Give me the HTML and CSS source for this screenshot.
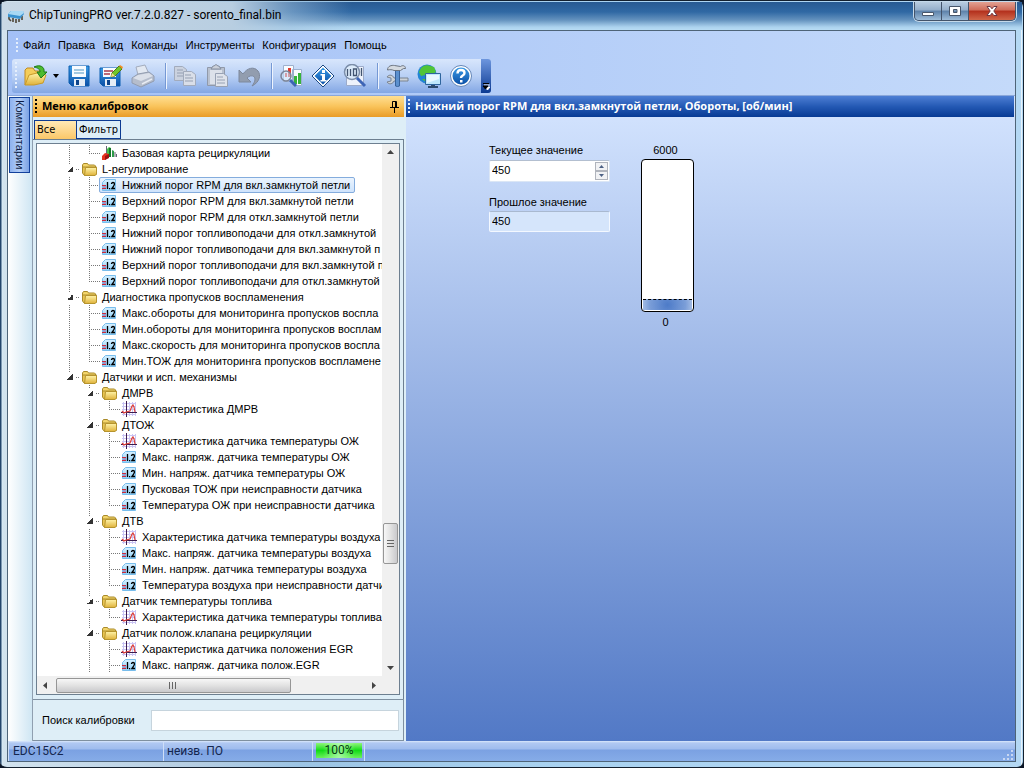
FILE: index.html
```html
<!DOCTYPE html>
<html lang="ru">
<head>
<meta charset="utf-8">
<title>ChipTuningPRO</title>
<link rel="stylesheet" href="styles.css">
</head>
<body>
<svg class="defs" aria-hidden="true">
  <defs>
    <linearGradient id="gFold" x1="0" y1="0" x2="0" y2="1"><stop offset="0" stop-color="#fff3a8"/><stop offset="1" stop-color="#dfb23a"/></linearGradient>
    <linearGradient id="gBlue" x1="0" y1="0" x2="0" y2="1"><stop offset="0" stop-color="#3a9be6"/><stop offset="1" stop-color="#0a4fa6"/></linearGradient>
    <linearGradient id="gNum" x1="0" y1="0" x2="0" y2="1"><stop offset="0" stop-color="#d6f0ff"/><stop offset="1" stop-color="#8fd0f8"/></linearGradient>
  </defs>
  <symbol id="folder" viewBox="0 0 17 16">
    <path d="M1.500 11.500V4l1-1.500h4L7.500 4h6l1 1v7" fill="#f3d56a" stroke="#a98a2a"/>
    <path d="M4.500 6h11v7l-1.500 1.500H3.500L1.500 12V6z" fill="#e8c552" stroke="#a98a2a"/>
    <path d="M4.500 6.500h11v6.500l-1.500 1.500H3.500z" fill="url(#gFold)" stroke="#b6942e"/>
  </symbol>
  <symbol id="num" viewBox="0 0 17 16">
    <path d="M4.500 2.500h10v11h-13v-8z" fill="url(#gNum)" stroke="#78bdec"/>
    <path d="M1 8.500h4M1 11.500h4" stroke="#cc2a3a"/><path d="M2 10h3" stroke="#8a5aa0"/>
    <path d="M6.500 5v7M10.500 7q0-1.500 1.500-1.500t1.500 1.500q0 1-2.500 4.500h3" fill="none" stroke="#000" stroke-width="1.300"/><path d="M8 11h1.200v1.200H8z"/>
  </symbol>
  <symbol id="graph" viewBox="0 0 17 16">
    <path d="M1 2.500h14M1 5.500h14M1 8.500h14M1 13.500h14M2.500 1v14M8.500 1v14M11.500 1v14M14.500 1v14" stroke="#c9c4f4"/>
    <path d="M5.500 0v16M0 11.500h16" stroke="#3c1c50"/>
    <path d="M1 10l2 2 2-1 4-1 2-5 1-1 1 2 1 5" fill="none" stroke="#e04038" stroke-width="1.200"/>
  </symbol>
  <symbol id="map" viewBox="0 0 17 16">
    <path d="M5.500 1v9M14 7v5M15.500 9v3" stroke="#667"/>
    <path d="M6 4l2-2 2 1v9H6z" fill="#47bf4a"/><path d="M8 3l2 0v9L8 12z" fill="#14752a"/>
    <path d="M11 5l2 1v6h-2z" fill="#2c9a48"/><path d="M1 11l3-3 4 1v3l-4 3H1z" fill="#e5321e"/><path d="M4 11l4-2v4l-4 2z" fill="#a01010"/>
  </symbol>
  <symbol id="grip" viewBox="0 0 4 14"><path d="M2 0v14" stroke="currentColor" stroke-width="2" stroke-dasharray="2 2"/></symbol>
</svg>

<div class="window">
  <header class="titlebar">
    <svg class="chip" viewBox="0 0 18 14"><path d="M2 6v3l2 2M6 8v4M9 9v4M12 9v3M15 6v4" fill="none" stroke="#4f4638" stroke-width="1.600"/><path d="M1 4l3-3h12l1 3-4 5-12-2z" fill="#3b92cf"/><path d="M1 4l3-3h12l1 2-4 3z" fill="#a8d8f4"/></svg>
    <h1 class="caption">ChipTuningPRO ver.7.2.0.827 - sorento_final.bin</h1>
    <div class="winbuttons">
      <button class="winbtn" aria-label="Свернуть"><svg viewBox="0 0 14 12"><path d="M1.500 7.500h11v3h-11z" fill="#fff" stroke="#48566a"/></svg></button>
      <button class="winbtn" aria-label="Развернуть"><svg viewBox="0 0 14 12"><path d="M1.500 1.500h11v9h-11z M5.500 4.500v3h3.500v-3z" fill="#fff" fill-rule="evenodd" stroke="#48566a"/></svg></button>
      <button class="winbtn winbtn-close" aria-label="Закрыть"><svg viewBox="0 0 14 12"><path d="M2 1.500h3.200L7 3.800l1.800-2.300H12L8.800 6l3.200 4.500H8.800L7 8.200l-1.800 2.300H2L5.200 6z" fill="#fff" stroke="#6b3540"/></svg></button>
    </div>
  </header>

  <div class="client">
    <nav class="menubar">
      <svg class="grip"><use href="#grip"/></svg>
      <button class="menu">Файл</button><button class="menu">Правка</button><button class="menu">Вид</button><button class="menu">Команды</button><button class="menu">Инструменты</button><button class="menu">Конфигурация</button><button class="menu">Помощь</button>
    </nav>

    <div class="toolbar-row">
      <div class="toolbar">
        <svg class="grip grip-tall" viewBox="0 0 4 28"><path d="M2 0v28" stroke="currentColor" stroke-width="2" stroke-dasharray="2 2"/></svg>
        <button class="tool" aria-label="Открыть"><svg viewBox="0 0 24 24"><path d="M1 21V6l2-2h6l2 3h8v5" fill="#f4cd5a" stroke="#c08a20"/><path d="M1 21l4-10 8-2 9 2-3 8-9 2z" fill="url(#gFold)" stroke="#c99a28"/><path d="M10 3c6-3 11 0 10 5h3l-6 6-4-6h3c0-3-2-4-6-5z" fill="#4cbb2e" stroke="#1b7a17"/></svg></button>
        <button class="drop" aria-label="Список файлов"><svg viewBox="0 0 6 4"><path d="M0 0h6L3 4z"/></svg></button>
        <button class="tool" aria-label="Сохранить"><svg viewBox="0 0 24 24"><path d="M2 2h20v20H5l-3-3z" fill="url(#gBlue)" stroke="#0b5eb0"/><path d="M5 2h14v11H5z" fill="#f7fbff"/><path d="M7 6h10M7 9h10" stroke="#86b8d8" stroke-width="1.500"/><path d="M7 15h11v7H7z" fill="#e4edf6"/><path d="M9 16h3v5H9z" fill="#0c448c"/></svg></button>
        <button class="tool" aria-label="Сохранить как"><svg viewBox="0 0 24 24"><path d="M1 4h20v18H4l-3-3z" fill="url(#gBlue)" stroke="#0b5eb0"/><path d="M4 4h13v9H4z" fill="#f7fbff"/><path d="M5 7h9M5 10h6" stroke="#a93a4c" stroke-width="1.500"/><path d="M6 15h11v7H6z" fill="#e4edf6"/><path d="M8 16h3v5H8z" fill="#0c448c"/><path d="M12 13l1-4 7-7 3 3-7 7z" fill="#6fc62a" stroke="#4d7716"/><path d="M20 2l1-1 3 2-1 2z" fill="#f19022"/><path d="M12 13l1-4 3 3z" fill="#f6dc90"/></svg></button>
        <button class="tool" aria-label="Печать"><svg viewBox="0 0 24 24"><path d="M7 11L5 3l9-2 4 9z" fill="#e2e8f1" stroke="#a3acbd"/><path d="M1 14l6-4 11-2 5 4v5l-13 6-9-4z" fill="#b5bdcc" stroke="#929caf"/><path d="M2 14l5-3 11-2 4 3-12 5z" fill="#dbe0e9"/><path d="M11 20l10-5" stroke="#e7ebf2" stroke-width="1.500"/></svg></button>
        <span class="sep"></span>
        <button class="tool" aria-label="Копировать"><svg viewBox="0 0 24 24"><path d="M1.500 2.500h8l4 3v11h-12z" fill="#cbd2df" stroke="#a2abbc"/><path d="M4 6h6M4 9h8M4 12h8" stroke="#96a0b3"/><path d="M10.500 7.500h8l4 3v11h-12z" fill="#d9dee8" stroke="#a2abbc"/><path d="M12 11h6M12 14h8M12 17h8" stroke="#96a0b3"/></svg></button>
        <button class="tool" aria-label="Вставить"><svg viewBox="0 0 24 24"><path d="M2.500 3.500h17v18h-17z" fill="#b9c1cf" stroke="#9099aa"/><path d="M5 6h12v14H5z" fill="#dce1ea"/><path d="M6 5l2-3h1q2-3 4 0h1l2 3z" fill="#cbd0d9" stroke="#848e9f"/><path d="M10.500 9.500h8l4 3v10h-12z" fill="#dfe3eb" stroke="#98a2b4"/><path d="M12 13h6M12 16h8M12 19h8" stroke="#98a2b4"/></svg></button>
        <button class="tool" aria-label="Отменить"><svg viewBox="0 0 24 24"><path d="M2 6v12h12l-4-4c5-5 12-1 5 8 8-4 9-11 6-15-4-5-11-3-15 3z" fill="#929daf" stroke="#7d889c"/></svg></button>
        <span class="sep"></span>
        <button class="tool" aria-label="Сравнить"><svg viewBox="0 0 24 24"><path d="M4.500 1.500h10v16h-10zM13.500 5.500h9v16h-9z" fill="#f8fbff" stroke="#9cb0ce"/><path d="M6 9h2v4H6zM9 4h3v9H9z" fill="#e23a2e"/><path d="M15 12h3v8h-3zM19 9h3v11h-3z" fill="#36b43b"/><circle cx="7" cy="12" r="5" fill="#c8e1f8" fill-opacity=".6" stroke="#7b8498" stroke-width="1.500"/><path d="M11 16l6 6" stroke="#3d65b6" stroke-width="3"/></svg></button>
        <button class="tool" aria-label="Информация"><svg viewBox="0 0 24 24"><path d="M12 1l11 11-11 11L1 12z" fill="#fff" stroke="#194783"/><path d="M12 3.500l8.500 8.500-8.500 8.500L3.500 12z" fill="url(#gBlue)"/><path d="M11 6h3v3h-3zM9.500 10H14v6h1.500v1.500h-6V16H11v-4.500H9.500z" fill="#fff"/></svg></button>
        <button class="tool" aria-label="Просмотр кода"><svg viewBox="0 0 24 24"><path d="M3.500 2.500h17v19h-17z" fill="#edf2fb" stroke="#9cabca"/><circle cx="9" cy="8" r="7.500" fill="#dcebfb" stroke="#7b8da9" stroke-width="1.500"/><path d="M4.500 5v7M7.500 5v7M18.500 4v8M10.500 5v6.500h3V5z" fill="none" stroke="#425470" stroke-width="1.300"/><path d="M14 14l8 8" stroke="#3d65b6" stroke-width="3"/></svg></button>
        <span class="sep"></span>
        <button class="tool" aria-label="Настройки"><svg viewBox="0 0 24 24"><path d="M2 13l4 1v3l-4 1c2 3 6 2 7-1h14v-3H9c-1-3-5-4-7-1z" fill="#cbd1d8" stroke="#7b8490"/><path d="M10.500 6h4v16q-2 1-4 0z" fill="#5c90ce" stroke="#38639c"/><path d="M2.500 6c0-4 4-5 7-4.500l6 1c2-1.500 5-1 5 2h-2l-3 2H9c-2-1-4-1-6.500-.5z" fill="#d5dae0" stroke="#6d7581"/></svg></button>
        <button class="tool" aria-label="Обновление"><svg viewBox="0 0 24 24"><circle cx="10" cy="10" r="9.500" fill="#2285d4"/><path d="M4 4c5-5 9-2 13-1l2 5-5 3-2 4-4-4-4 1-2-4zM5 15l4 0v3z" fill="#50c537"/><path d="M8.500 9.500h15v11h-15z" fill="#bfe7fb" stroke="#2e659d"/><path d="M10 11h12v4l-12 4z" fill="#e8f8ff"/><path d="M14 21h4v1h3v2H11v-2h3z" fill="#2c4a6d"/></svg></button>
        <button class="tool" aria-label="Помощь"><svg viewBox="0 0 24 24"><circle cx="12" cy="12" r="10.500" fill="#fff" stroke="#6386b8"/><circle cx="12" cy="12" r="8.500" fill="url(#gBlue)"/><path d="M8.500 9.500q0-3.500 3.500-3.500t3.500 3q0 1.500-1.800 2.500t-1.700 2.500" fill="none" stroke="#fff" stroke-width="2.400"/><path d="M11 16h2.500v2.500H11z" fill="#fff"/></svg></button>
        <button class="overflow" aria-label="Ещё"><svg viewBox="0 0 8 8"><path d="M2 2h6M3 4h5L5.500 7z" fill="#fff" stroke="#fff"/><path d="M1 .5h6M1 3h5L3.500 6z" stroke="#000"/></svg></button>
      </div>
    </div>

    <main class="workspace">
      <aside class="rail"><button class="railtab">Комментарии</button></aside>

      <section class="panel">
        <h2 class="panelhead"><svg class="grip"><use href="#grip"/></svg><span class="headtext">Меню калибровок</span>
          <button class="pin" aria-label="Закрепить"><svg viewBox="0 0 9 13"><path d="M2.500 7V1.500h4V7M5.500 1v6M0 7.500h9M4.500 8v5" fill="none" stroke="#000"/></svg></button></h2>
        <div class="tabs"><button class="tab tab-on">Все</button><button class="tab">Фильтр</button></div>
        <div class="treeframe">
          <div class="treebox">
            <div class="treeview">
              <ul class="tree">
                <li><ul>
                  <li class="leaf"><span class="row"><span class="item"><svg class="ico"><use href="#map"/></svg><span class="label">Базовая карта рециркуляции</span></span></span></li>
                </ul></li>
                <li><span class="row"><i class="twisty"></i><span class="item"><svg class="ico"><use href="#folder"/></svg><span class="label">L-регулирование</span></span></span>
                  <ul>
                    <li class="leaf"><span class="row"><span class="item selected"><svg class="ico"><use href="#num"/></svg><span class="label">Нижний порог RPM для вкл.замкнутой петли</span></span></span></li>
                    <li class="leaf"><span class="row"><span class="item"><svg class="ico"><use href="#num"/></svg><span class="label">Верхний порог RPM для вкл.замкнутой петли</span></span></span></li>
                    <li class="leaf"><span class="row"><span class="item"><svg class="ico"><use href="#num"/></svg><span class="label">Верхний порог RPM для откл.замкнутой петли</span></span></span></li>
                    <li class="leaf"><span class="row"><span class="item"><svg class="ico"><use href="#num"/></svg><span class="label">Нижний порог топливоподачи для откл.замкнутой</span></span></span></li>
                    <li class="leaf"><span class="row"><span class="item"><svg class="ico"><use href="#num"/></svg><span class="label">Нижний порог топливоподачи для вкл.замкнутой п</span></span></span></li>
                    <li class="leaf"><span class="row"><span class="item"><svg class="ico"><use href="#num"/></svg><span class="label">Верхний порог топливоподачи для вкл.замкнутой п</span></span></span></li>
                    <li class="leaf"><span class="row"><span class="item"><svg class="ico"><use href="#num"/></svg><span class="label">Верхний порог топливоподачи для откл.замкнутой</span></span></span></li>
                  </ul></li>
                <li><span class="row"><i class="twisty"></i><span class="item"><svg class="ico"><use href="#folder"/></svg><span class="label">Диагностика пропусков воспламенения</span></span></span>
                  <ul>
                    <li class="leaf"><span class="row"><span class="item"><svg class="ico"><use href="#num"/></svg><span class="label">Макс.обороты для мониторинга пропусков воспла</span></span></span></li>
                    <li class="leaf"><span class="row"><span class="item"><svg class="ico"><use href="#num"/></svg><span class="label">Мин.обороты для мониторинга пропусков восплам</span></span></span></li>
                    <li class="leaf"><span class="row"><span class="item"><svg class="ico"><use href="#num"/></svg><span class="label">Макс.скорость для мониторинга пропусков воспла</span></span></span></li>
                    <li class="leaf"><span class="row"><span class="item"><svg class="ico"><use href="#num"/></svg><span class="label">Мин.ТОЖ для мониторинга пропусков воспламене</span></span></span></li>
                  </ul></li>
                <li><span class="row"><i class="twisty"></i><span class="item"><svg class="ico"><use href="#folder"/></svg><span class="label">Датчики и исп. механизмы</span></span></span>
                  <ul class="open-end">
                    <li><span class="row"><i class="twisty"></i><span class="item"><svg class="ico"><use href="#folder"/></svg><span class="label">ДМРВ</span></span></span>
                      <ul><li class="leaf"><span class="row"><span class="item"><svg class="ico"><use href="#graph"/></svg><span class="label">Характеристика ДМРВ</span></span></span></li></ul></li>
                    <li><span class="row"><i class="twisty"></i><span class="item"><svg class="ico"><use href="#folder"/></svg><span class="label">ДТОЖ</span></span></span>
                      <ul>
                        <li class="leaf"><span class="row"><span class="item"><svg class="ico"><use href="#graph"/></svg><span class="label">Характеристика датчика температуры ОЖ</span></span></span></li>
                        <li class="leaf"><span class="row"><span class="item"><svg class="ico"><use href="#num"/></svg><span class="label">Макс. напряж. датчика температуры ОЖ</span></span></span></li>
                        <li class="leaf"><span class="row"><span class="item"><svg class="ico"><use href="#num"/></svg><span class="label">Мин. напряж. датчика температуры ОЖ</span></span></span></li>
                        <li class="leaf"><span class="row"><span class="item"><svg class="ico"><use href="#num"/></svg><span class="label">Пусковая ТОЖ при неисправности датчика</span></span></span></li>
                        <li class="leaf"><span class="row"><span class="item"><svg class="ico"><use href="#num"/></svg><span class="label">Температура ОЖ при неисправности датчика</span></span></span></li>
                      </ul></li>
                    <li><span class="row"><i class="twisty"></i><span class="item"><svg class="ico"><use href="#folder"/></svg><span class="label">ДТВ</span></span></span>
                      <ul>
                        <li class="leaf"><span class="row"><span class="item"><svg class="ico"><use href="#graph"/></svg><span class="label">Характеристика датчика температуры воздуха</span></span></span></li>
                        <li class="leaf"><span class="row"><span class="item"><svg class="ico"><use href="#num"/></svg><span class="label">Макс. напряж. датчика температуры воздуха</span></span></span></li>
                        <li class="leaf"><span class="row"><span class="item"><svg class="ico"><use href="#num"/></svg><span class="label">Мин. напряж. датчика температуры воздуха</span></span></span></li>
                        <li class="leaf"><span class="row"><span class="item"><svg class="ico"><use href="#num"/></svg><span class="label">Температура воздуха при неисправности датчи</span></span></span></li>
                      </ul></li>
                    <li><span class="row"><i class="twisty"></i><span class="item"><svg class="ico"><use href="#folder"/></svg><span class="label">Датчик температуры топлива</span></span></span>
                      <ul><li class="leaf"><span class="row"><span class="item"><svg class="ico"><use href="#graph"/></svg><span class="label">Характеристика датчика температуры топлива</span></span></span></li></ul></li>
                    <li><span class="row"><i class="twisty"></i><span class="item"><svg class="ico"><use href="#folder"/></svg><span class="label">Датчик полож.клапана рециркуляции</span></span></span>
                      <ul class="open-end">
                        <li class="leaf"><span class="row"><span class="item"><svg class="ico"><use href="#graph"/></svg><span class="label">Характеристика датчика положения EGR</span></span></span></li>
                        <li class="leaf"><span class="row"><span class="item"><svg class="ico"><use href="#num"/></svg><span class="label">Макс. напряж. датчика полож.EGR</span></span></span></li>
                      </ul></li>
                  </ul></li>
              </ul>
            </div>
            <div class="vscroll"><svg class="arrow" viewBox="0 0 7 7"><path d="M0 5l3.500-4L7 5z"/></svg><span class="space-before"></span><span class="thumb vthumb"></span><span class="space-after"></span><svg class="arrow" viewBox="0 0 7 7"><path d="M0 2h7L3.500 6z"/></svg></div>
            <div class="hscroll"><svg class="arrow" viewBox="0 0 7 7"><path d="M5 0v7L1 3.500z"/></svg><span class="thumb hthumb"></span><svg class="arrow" viewBox="0 0 7 7"><path d="M2 0v7l4-3.500z"/></svg></div>
            <div class="corner"></div>
          </div>
        </div>
        <div class="search"><label for="find">Поиск калибровки</label><input id="find" class="searchbox" type="text"></div>
      </section>

      <section class="detail">
        <h2 class="detailhead"><svg class="grip"><use href="#grip"/></svg><span class="headtext">Нижний порог RPM для вкл.замкнутой петли, Обороты, [об/мин]</span></h2>
        <div class="values">
          <div class="fields">
            <label for="cur">Текущее значение</label>
            <div class="spin"><input id="cur" type="text" value="450">
              <span class="steppers"><button class="step" aria-label="Больше"><svg viewBox="0 0 5 3"><path d="M0 3h5L2.500 0z"/></svg></button><button class="step" aria-label="Меньше"><svg viewBox="0 0 5 3"><path d="M0 0h5L2.500 3z"/></svg></button></span></div>
            <label class="second" for="prev">Прошлое значение</label>
            <input id="prev" class="previous" type="text" value="450" readonly>
          </div>
          <div class="gauge"><span class="limit">6000</span><div class="meter"><div class="fill"></div></div><span class="limit">0</span></div>
        </div>
      </section>
    </main>

    <footer class="status">
      <span class="cell cell-ecu">EDC15C2</span><span class="cell cell-sw">неизв. ПО</span><span class="cell cell-pct"><b class="percent">100%</b></span><span class="cell cell-rest"><svg class="resize" viewBox="0 0 12 12"><path d="M8 1h2v2H8zM4 5h2v2H4zM8 5h2v2H8zM0 9h2v2H0zM4 9h2v2H4zM8 9h2v2H8z" fill="#c9d8f2"/></svg></span>
    </footer>
  </div>
</div>
</body>
</html>
```
FILE: styles.css
```css
* { box-sizing: border-box; }
body { margin: 0; background: #0b1424; color: #000; font: 11px/16px "Liberation Sans", sans-serif; }
button { margin: 0; padding: 0; border: 0; background: none; font: inherit; color: inherit; }
input { margin: 0; border: 0; font: inherit; color: inherit; border-radius: 0; }
h1, h2 { margin: 0; font-weight: normal; }
ul { list-style: none; margin: 0; padding: 0; }
.defs { position: absolute; width: 0; height: 0; }

.window {
  height: 100vh; display: flex; flex-direction: column; padding: 1px 7px 5px 7px;
  border: 1px solid #14202e; border-left: 0; border-radius: 7px;
  background:
    linear-gradient(#e6f2fa, #e6f2fa) right 1px top 8px / 1px 100% no-repeat,
    linear-gradient(90deg, #24456b 1px, #d8ecf8 2px, transparent 3px),
    linear-gradient(90deg, #d3e3ee 0, #b4cde2 200px, #9cc4e4 300px, #a9d2f0 560px, #b4d8f4 100%);
}
.titlebar {
  display: flex; flex: none; height: 28px; margin: 0 -6px 0 -5px; padding-left: 5px;
  background: linear-gradient(90deg, #c9d8e6 0, #b8cee1 230px, rgba(160,192,220,.5) 290px, rgba(255,255,255,0) 350px), linear-gradient(#285a92 0, #3069a4 10px, #6492be 18px, #acd2ee 25px, #b8dcf4 100%);
}
.chip { width: 18px; height: 14px; margin: 8px 4px 0 0; }
.caption { font: 12px/26px Roboto, sans-serif; flex: 1; white-space: nowrap; }
.winbuttons { display: flex; height: 19px; margin-right: 6px; border: 1px solid #43536a; border-top: 0; border-radius: 0 0 5px 5px; overflow: hidden; box-shadow: 0 0 0 1px #c5d9ea; }
.winbtn { width: 27px; border-right: 1px solid #43536a; background: linear-gradient(#b9cce0, #94aeca 45%, #5c81a9 50%, #9ebcd8); display: flex; align-items: center; justify-content: center; }
.winbtn svg { width: 14px; height: 12px; }
.winbtn-close { width: 46px; border: 0; background: linear-gradient(#e2a193, #cf6b58 45%, #b32f1c 50%, #d0674a); }

.client { flex: 1; min-height: 0; display: flex; flex-direction: column; border: 1px solid #4e6478; background: linear-gradient(90deg, #a3c0f6, #c4dafa); }
.menubar { display: flex; align-items: center; height: 28px; padding-left: 7px; }
.grip { width: 4px; height: 14px; color: #e5effd; flex: none; }
.grip-tall { height: 28px; }
.menu { padding: 0 4px; }
.toolbar-row { height: 37px; padding-left: 4px; display: flex; align-items: flex-start; border-bottom: 1px solid #8aa7da; }
.toolbar { display: flex; align-items: center; height: 34px; padding-left: 2px; border-radius: 3px; background: linear-gradient(#d8e6fc, #b9d0f5 50%, #83a7e4); }
.tool { width: 32px; height: 32px; display: flex; align-items: center; justify-content: center; }
.tool svg { width: 24px; height: 24px; }
.grip-tall + .tool { margin-left: 2px; }
.drop { width: 8px; height: 24px; margin: 0 2px 0 1px; display: flex; align-items: center; }
.drop svg { width: 6px; height: 4px; }
.sep { width: 2px; height: 26px; margin: 0 2px 0 6px; border-left: 1px solid #7598d4; background: #eef4fe; }
.overflow { width: 10px; height: 34px; margin-left: 4px; border-radius: 0 3px 3px 0; background: linear-gradient(#6d96de, #0c3a92); display: flex; align-items: flex-end; justify-content: center; padding-bottom: 2px; }
.overflow svg { width: 8px; height: 8px; }

.workspace { flex: 1; min-height: 0; display: flex; background: #deeef7; }
.rail { width: 25px; padding: 1px; background: linear-gradient(90deg, #fff, #cfe6f3); border-right: 1px solid #8f9fb0; flex: none; }
.railtab { width: 21px; height: 76px; writing-mode: vertical-rl; border: 1px solid #12419c; background: linear-gradient(90deg, #8eb2ee, #b3cef7 50%, #7ba2e4); font-size: 11px; line-height: 19px; color: #0c1c44; }
.panel { width: 371px; flex: none; display: flex; flex-direction: column; }
.panelhead, .detailhead { display: flex; align-items: center; height: 21px; flex: none; font: bold 11px/20px "Open Sans", sans-serif; white-space: nowrap; padding-bottom: 1px; }
.detailhead { padding-left: 1px; }
.panelhead { background: linear-gradient(#ffdf92, #f9c35a 50%, #e99b26); }
.headtext { flex: 1; margin-left: 4px; overflow: hidden; }
.panelhead .grip { color: #000; margin-left: 1px; }
.pin { width: 9px; height: 13px; margin-right: 5px; display: flex; }
.pin svg { width: 9px; height: 13px; }
.tabs { display: flex; height: 22px; padding: 3px 0 0 1px; font: 11px/16px "DejaVu Sans Condensed", "DejaVu Sans", sans-serif; flex: none; }
.tab { width: 45px; height: 19px; border: 1px solid #0c3a92; background: #deeef7; }
.tab-on { width: 42px; border-width: 1px 0 0 1px; text-align: left; padding-left: 2px; background: linear-gradient(#ffe9b6, #fbc768); }
.treeframe { flex: 1; min-height: 0; padding: 3px 3px 4px; border-top: 1px solid #6d7f90; border-right: 1px solid #6d7f90; }
.treebox { height: 100%; display: grid; grid-template: minmax(0, 1fr) 18px / minmax(0, 1fr) 17px; border: 1px solid #6d7f90; background: #fff; }
.treeview { overflow: hidden; padding-top: 1px; }
.tree { padding-left: 23px; }
.tree ul { padding-left: 20px; }
.tree li { background: repeating-linear-gradient(#777 0 1px, transparent 1px 2px) 9px 0 / 1px 100% no-repeat; }
.tree > li:last-child { background-size: 1px 8px; }
.tree ul:not(.open-end) > li:last-child { background-size: 1px 8px; }
.row { display: flex; height: 16px; white-space: nowrap; }
.leaf > .row { padding-left: 19px; background: repeating-linear-gradient(90deg, #777 0 1px, transparent 1px 2px) 9px 8px / 11px 1px no-repeat; }
.twisty { width: 19px; height: 16px; flex: none; background: repeating-linear-gradient(90deg, #777 0 1px, transparent 1px 2px) 16px 8px / 3px 1px no-repeat, linear-gradient(135deg, transparent 50%, #333 50%) 7px 5px / 6px 6px no-repeat, linear-gradient(#fff, #fff) 5px 3px / 12px 12px no-repeat; }
.item { display: flex; align-items: center; border: 1px solid transparent; border-radius: 2px; height: 16px; }
.selected { border-color: #84acdd; background: linear-gradient(#ebf4fe, #cfe3fc); }
.ico { width: 17px; height: 16px; margin-left: 1px; flex: none; }
.label { padding: 0 4px; line-height: 14px; }
.vscroll { display: flex; flex-direction: column; align-items: center; padding: 5px 0; background: #f0f0f0; }
.hscroll { display: flex; align-items: center; padding: 0 5px; background: #f0f0f0; }
.corner { background: #f0f0f0; }
.arrow { width: 7px; height: 7px; fill: #444; flex: none; }
.space-before { flex: 367; }
.space-after { flex: 100; }
.thumb { border: 1px solid #969696; border-radius: 2px; flex: none; }
.vthumb { width: 15px; height: 41px; background: repeating-linear-gradient(#666 0 1px, transparent 1px 3px) center / 7px 8px no-repeat, linear-gradient(90deg, #f7f7f7, #e2e2e2 50%, #c9c9cc); }
.hthumb { height: 15px; width: 70%; margin: 0 auto 0 7px; background: repeating-linear-gradient(90deg, #666 0 1px, transparent 1px 3px) center / 8px 7px no-repeat, linear-gradient(#f7f7f7, #e2e2e2 50%, #c9c9cc); }
.search { height: 42px; flex: none; display: flex; align-items: center; border: 1px solid #7f90a0; border-left: 0; padding: 0 4px 0 9px; }
.search label { width: 109px; }
.searchbox { flex: 1; min-width: 0; height: 21px; border: 1px solid #c6d4dd; background: #fff; padding: 0 4px; }

.detail { flex: 1; min-width: 0; margin-left: 2px; display: flex; flex-direction: column; background: linear-gradient(#d5e5ff, #5279c6); }
.detailhead { color: #fff; background: linear-gradient(#4e7fd4, #2459b4 50%, #073a94); margin-right: 1px; }
.values { display: flex; align-items: flex-start; padding: 25px 0 0 83px; }
.fields { width: 121px; display: flex; flex-direction: column; }
.fields label { height: 18px; }
.spin { height: 22px; display: flex; align-items: center; background: #fff; border: 1px solid #dbe6f5; border-top-color: #b3bfd0; border-radius: 2px; padding-right: 1px; }
.spin input { flex: 1; min-width: 0; padding: 0 2px 2px; background: none; }
.steppers { display: flex; flex-direction: column; }
.step { width: 13px; height: 9px; border: 1px solid #b0b4bc; background: #f1f2f4; display: flex; align-items: center; justify-content: center; }
.step svg { width: 5px; height: 3px; fill: #4d6185; }
.fields .second { margin-top: 12px; height: 17px; }
.previous { width: 100%; height: 21px; padding: 0 2px 2px; background: #d5e5fb; border: 1px solid #f3f8ff; border-top-color: #a9b9d0; border-radius: 2px; }
.gauge { width: 53px; margin-left: 31px; display: flex; flex-direction: column; align-items: center; }
.limit { padding-right: 4px; }
.meter { width: 53px; height: 153px; margin: 1px 0 2px; padding: 1px; border: 1px solid #000; border-radius: 4px; background: #fff; display: flex; align-items: flex-end; }
.fill { width: 100%; height: 11px; border-top: 1px dashed #000; background: radial-gradient(circle 30px at 50% 50%, #4d7bc8, #7b9ed8 60%, #c1d2ee); }

.status { display: flex; height: 20px; flex: none; background: linear-gradient(#dbe8fb 0, #b0c8f2 2px, #9fbcee 8px, #7ba1e2 9px, #86ace8 100%); font: 12px/20px Roboto, sans-serif; color: #14264e; }
.cell { border-left: 1px solid #cfdff8; padding-left: 4px; white-space: nowrap; }
.cell-ecu { width: 155px; }
.cell-sw { width: 149px; padding-left: 3px; }
.cell-pct { width: 52px; padding: 2px 2px 0 3px; }
.cell-rest { flex: 1; display: flex; justify-content: flex-end; align-items: flex-end; }
.percent { display: block; height: 15px; line-height: 15px; font-weight: normal; text-align: center; color: #063a10; background: linear-gradient(90deg, rgba(255,255,255,0) 15%, rgba(190,255,190,.7) 50%, rgba(255,255,255,0) 85%), linear-gradient(#8ff57a, #12dc16 50%, #6cf15c); }
.resize { width: 12px; height: 12px; }
```
